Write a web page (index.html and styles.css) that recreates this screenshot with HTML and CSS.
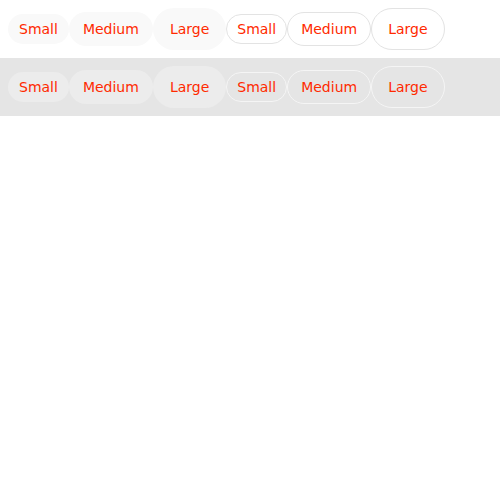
FILE: index.html
```html
<!DOCTYPE html>
<html>
<head>
<meta charset="utf-8">
<link rel="stylesheet" href="styles.css">
</head>
<body>
<div class="row light">
  <button class="btn fill sm">Small</button>
  <button class="btn fill md">Medium</button>
  <button class="btn fill lg">Large</button>
  <button class="btn outline sm">Small</button>
  <button class="btn outline md">Medium</button>
  <button class="btn outline lg">Large</button>
</div>
<div class="row dark">
  <button class="btn fill sm">Small</button>
  <button class="btn fill md">Medium</button>
  <button class="btn fill lg">Large</button>
  <button class="btn outline sm">Small</button>
  <button class="btn outline md">Medium</button>
  <button class="btn outline lg">Large</button>
</div>
</body>
</html>
```
FILE: styles.css
```css
html, body {
  margin: 0;
  padding: 0;
  background: #ffffff;
}
.row {
  display: flex;
  align-items: center;
  padding: 8px;
}
.row.dark {
  background: #e5e5e5;
}
.btn {
  font-family: "DejaVu Sans", Verdana, sans-serif;
  font-size: 14px;
  line-height: 16px;
  color: #ff2a00;
  border: 1px solid transparent;
  border-radius: 999px;
  margin: 0;
  cursor: pointer;
}
.btn.sm { padding: 6px 10px; }
.btn.md { padding: 8px 13px; }
.btn.lg { padding: 12px 16px; }
.light .fill { background: #f9f9f9; }
.dark .fill { background: #ececec; }
.outline { background: transparent; }
.light .outline { border-color: #e3e3e3; }
.dark .outline { border-color: #f5f5f5; }
```
